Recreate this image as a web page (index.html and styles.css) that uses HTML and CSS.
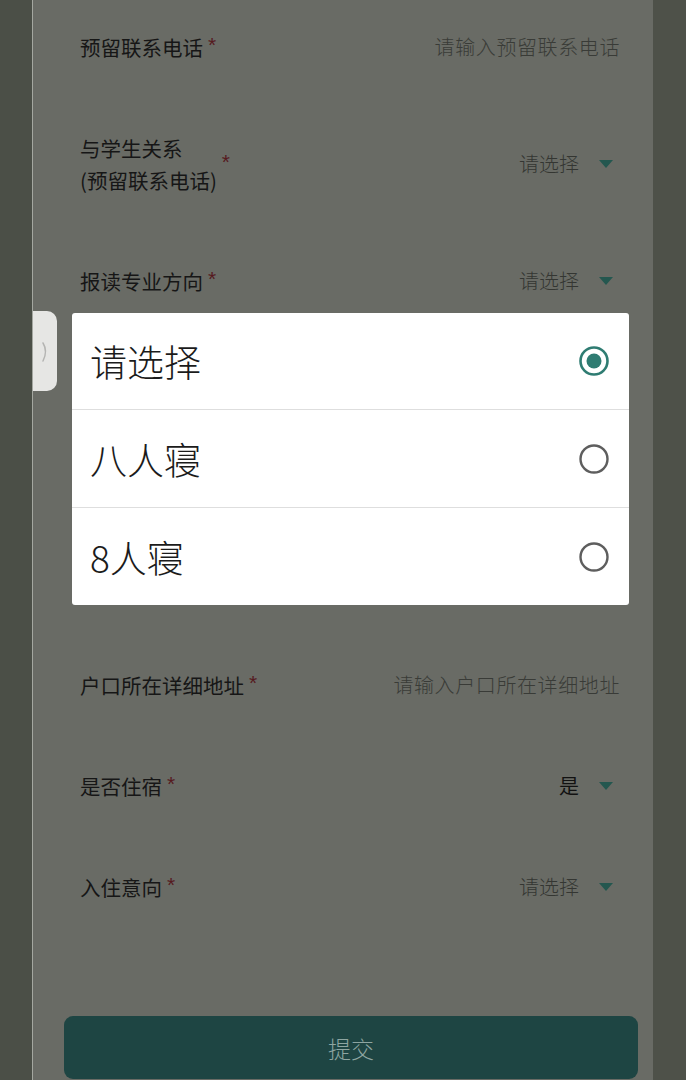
FILE: index.html
```html
<!DOCTYPE html>
<html lang="zh-CN">
<head>
<meta charset="utf-8">
<title>表单</title>
<link rel="stylesheet" href="styles.css">
</head>
<body>
<div class="frame">
  <div class="gutter gutter-left"></div>
  <main class="page">
    <div class="form">
      <div class="row">
        <div class="label"><span class="label-text">预留联系电话</span><span class="req">*</span></div>
        <div class="placeholder">请输入预留联系电话</div>
      </div>
      <div class="row row-tall">
        <div class="label"><span class="label-text">与学生关系<br>(预留联系电话)</span><span class="req">*</span></div>
        <div class="select"><span class="select-text">请选择</span><span class="caret"></span></div>
      </div>
      <div class="row">
        <div class="label"><span class="label-text">报读专业方向</span><span class="req">*</span></div>
        <div class="select"><span class="select-text">请选择</span><span class="caret"></span></div>
      </div>
      <div class="row"></div>
      <div class="row"></div>
      <div class="row"></div>
      <div class="row">
        <div class="label"><span class="label-text">户口所在详细地址</span><span class="req">*</span></div>
        <div class="placeholder">请输入户口所在详细地址</div>
      </div>
      <div class="row">
        <div class="label"><span class="label-text">是否住宿</span><span class="req">*</span></div>
        <div class="select"><span class="select-text value">是</span><span class="caret"></span></div>
      </div>
      <div class="row">
        <div class="label"><span class="label-text">入住意向</span><span class="req">*</span></div>
        <div class="select"><span class="select-text">请选择</span><span class="caret"></span></div>
      </div>
    </div>
    <button class="submit" type="button">提交</button>
  </main>
  <div class="gutter gutter-right"></div>
</div>

<div class="side-tab">
  <svg width="24" height="80" viewBox="0 0 24 80"><path d="M10 32 Q15 40 10 50" fill="none" stroke="#b4b4b2" stroke-width="1.5" stroke-linecap="round"/></svg>
</div>

<div class="picker">
  <div class="option">
    <span class="option-text">请选择</span>
    <svg class="radio" width="32" height="32" viewBox="0 0 32 32"><circle cx="16" cy="16" r="13.5" fill="none" stroke="#2f7c72" stroke-width="2.6"/><circle cx="16" cy="16" r="7.5" fill="#2f7c72"/></svg>
  </div>
  <div class="option">
    <span class="option-text">八人寝</span>
    <svg class="radio" width="32" height="32" viewBox="0 0 32 32"><circle cx="16" cy="16" r="13.5" fill="none" stroke="#5e5e5e" stroke-width="2.4"/></svg>
  </div>
  <div class="option">
    <span class="option-text">8人寝</span>
    <svg class="radio" width="32" height="32" viewBox="0 0 32 32"><circle cx="16" cy="16" r="13.5" fill="none" stroke="#5e5e5e" stroke-width="2.4"/></svg>
  </div>
</div>
</body>
</html>
```

FILE: styles.css
```css
html, body {
  margin: 0;
  padding: 0;
}
body {
  width: 686px;
  height: 1080px;
  overflow: hidden;
  background: #4c5048;
  font-family: "Noto Sans CJK SC", "Noto Sans", sans-serif;
}
.frame {
  display: grid;
  grid-template-columns: 33px 620px 33px;
  height: 1080px;
}
.gutter-left {
  background: #4b4f47;
  border-right: 1px solid #a4a7a0;
}
.gutter-right {
  background: #4e5149;
}
.page {
  background: #696b65;
  display: flex;
  flex-direction: column;
}
.form {
  display: flex;
  flex-direction: column;
  margin-top: -4px;
}
.row {
  height: 101px;
  display: flex;
  align-items: center;
  justify-content: space-between;
  padding: 0 33px 0 47px;
}
.row-tall {
  height: 133px;
}
.label {
  display: flex;
  align-items: center;
  color: #161616;
  font-size: 20.5px;
  line-height: 32px;
}
.req {
  color: #561a1f;
  font-family: "Liberation Sans", sans-serif;
  font-size: 21px;
  margin-left: 5px;
  margin-top: -3px;
}
.placeholder {
  color: #393b37;
  font-size: 20px;
  font-weight: 300;
  letter-spacing: 0.6px;
}
.select {
  display: flex;
  align-items: center;
  margin-right: 7px;
}
.select-text {
  color: #343632;
  font-size: 20px;
  font-weight: 300;
}
.select-text.value {
  color: #121212;
  font-weight: 400;
}
.caret {
  width: 0;
  height: 0;
  margin-left: 20px;
  border-left: 7.5px solid transparent;
  border-right: 7.5px solid transparent;
  border-top: 8px solid #24574f;
}
.submit {
  margin: 79px 15px 0 31px;
  height: 63px;
  border: none;
  border-radius: 9px;
  background: #1e4543;
  color: #8ea5a1;
  font-family: "Noto Sans CJK SC", sans-serif;
  font-size: 23px;
  font-weight: 300;
}
.side-tab {
  position: absolute;
  left: 33px;
  top: 311px;
  width: 24px;
  height: 80px;
  background: #e6e6e4;
  border-radius: 0 10px 10px 0;
}
.side-tab svg {
  display: block;
}
.picker {
  position: absolute;
  left: 72px;
  top: 313px;
  width: 557px;
  background: #ffffff;
  border-radius: 3px;
  display: flex;
  flex-direction: column;
}
.option {
  height: 97px;
  display: flex;
  align-items: center;
  justify-content: space-between;
  padding: 0 19px 0 18px;
  border-top: 1px solid #dedede;
}
.option:first-child {
  border-top: none;
  height: 96px;
}
.option-text {
  color: #1b1b1b;
  font-size: 37px;
  font-weight: 300;
}
.radio {
  display: block;
}
```
